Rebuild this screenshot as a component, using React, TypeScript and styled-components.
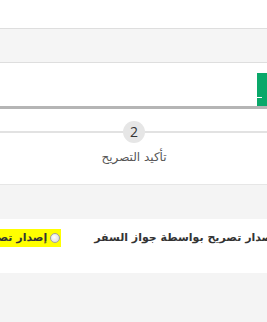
import React from "react";
import styled, { createGlobalStyle } from "styled-components";

const GlobalStyle = createGlobalStyle`
  html, body { margin: 0; padding: 0; background: #ffffff; }
  body { font-family: "DejaVu Sans", "Noto Sans", sans-serif; }
  #root { min-height: 322px; }
`;

const Page = styled.div`
  display: flex;
  flex-direction: column;
  width: 267px;
  min-height: 322px;
  overflow: hidden;
  direction: rtl;
`;

const TopSpacer = styled.div`
  height: 28px;
  background: #ffffff;
`;

const InfoBand = styled.div`
  height: 33px;
  background: #f5f5f5;
  border-top: 1px solid #dedede;
  border-bottom: 1px solid #dedede;
`;

const ActionBar = styled.div`
  height: 43px;
  background: #ffffff;
  border-bottom: 3px solid #b5b5b5;
  display: flex;
  justify-content: flex-start;
  align-items: flex-end;
`;

const NextButton = styled.button`
  width: 10px;
  height: 33px;
  border: 0;
  padding: 0;
  background: #0aa86a;
  display: flex;
  align-items: flex-start;
  justify-content: flex-end;
`;

const ButtonMark = styled.span`
  display: block;
  width: 5px;
  height: 1px;
  margin-top: 24px;
  background: #ffffff;
`;

const Stepper = styled.div`
  height: 75px;
  display: flex;
  flex-direction: column;
  align-items: center;
  padding-top: 12px;
  box-sizing: border-box;
`;

const StepTrack = styled.div`
  width: 100%;
  display: flex;
  align-items: center;
`;

const TrackSegment = styled.div`
  flex: 1;
  height: 2px;
  background: #e2e2e2;
`;

const StepCircle = styled.div`
  width: 22px;
  height: 22px;
  border-radius: 50%;
  background: #e6e6e6;
  color: #333333;
  font-family: "Open Sans", "DejaVu Sans", sans-serif;
  font-size: 14px;
  line-height: 22px;
  text-align: center;
  margin-right: -1px;
`;

const StepLabel = styled.div`
  margin-top: 7px;
  font-size: 12px;
  color: #555555;
  margin-left: 1px;
`;

const GrayBand = styled.div`
  height: 34px;
  background: #f4f4f4;
  border-top: 1px solid #e6e6e6;
`;

const OptionsPanel = styled.div`
  height: 54px;
  box-sizing: border-box;
  padding-top: 10px;
  background: #ffffff;
  display: flex;
  align-items: flex-start;
  justify-content: flex-start;
  overflow: hidden;
`;

const OptionsRow = styled.div`
  display: flex;
  align-items: center;
  gap: 32px;
  flex-shrink: 0;
  margin-right: -23px;
`;

const Option = styled.label<{ $highlight?: boolean }>`
  display: flex;
  align-items: center;
  gap: 3px;
  height: 18px;
  padding: 0 1px;
  background: ${(p) => (p.$highlight ? "#ffff00" : "transparent")};
  font-size: 11px;
  line-height: 18px;
  font-weight: bold;
  color: #333333;
  white-space: nowrap;
`;

const Radio = styled.span`
  width: 10px;
  height: 10px;
  border-radius: 50%;
  border: 1px solid #a0a0a0;
  background: radial-gradient(circle at 40% 40%, #ffffff, #d4d4d4);
  box-sizing: border-box;
`;

const Footer = styled.div`
  flex: 1;
  background: #f4f4f4;
`;

export default function App() {
  return (
    <>
      <GlobalStyle />
      <Page>
        <TopSpacer />
        <InfoBand />
        <ActionBar>
          <NextButton aria-label="التالي">
            <ButtonMark />
          </NextButton>
        </ActionBar>
        <Stepper>
          <StepTrack>
            <TrackSegment />
            <StepCircle>2</StepCircle>
            <TrackSegment />
          </StepTrack>
          <StepLabel>تأكيد التصريح</StepLabel>
        </Stepper>
        <GrayBand />
        <OptionsPanel>
          <OptionsRow>
            <Option>
              <Radio />
              إصدار تصريح بواسطة جواز السفر
            </Option>
            <Option $highlight>
              <Radio />
              إصدار تصريح بواسطة الهوية
            </Option>
          </OptionsRow>
        </OptionsPanel>
        <Footer />
      </Page>
    </>
  );
}
